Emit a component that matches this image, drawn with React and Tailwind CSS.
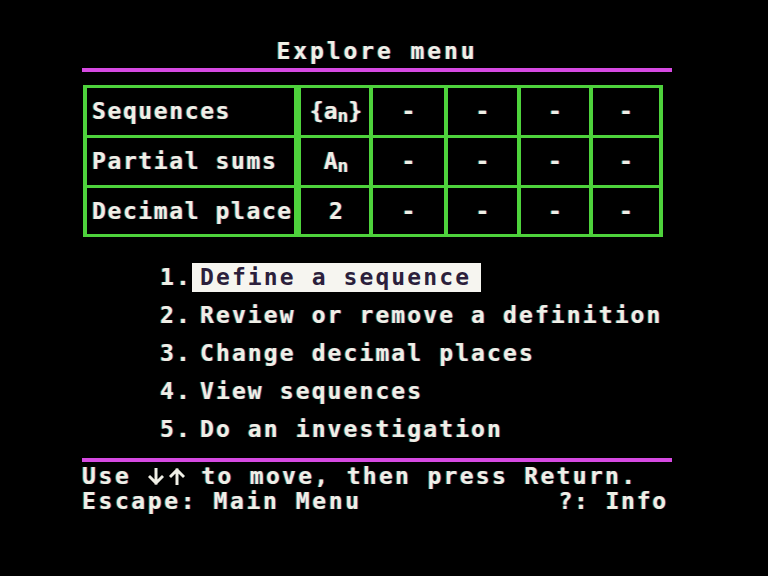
import React from 'react';

// Apple II style "Explore menu" screen
const rows = [
  { label: 'Sequences', sym: <>{'{'}a<Sub>n</Sub>{'}'}</> },
  { label: 'Partial sums', sym: <>A<Sub>n</Sub></> },
  { label: 'Decimal place', sym: '2' },
];

const items = [
  'Define a sequence',
  'Review or remove a definition',
  'Change decimal places',
  'View sequences',
  'Do an investigation',
];

function Sub({ children }) {
  return <span className="relative top-[4px] text-[18px] tracking-normal">{children}</span>;
}

function Arrow({ up }) {
  return (
    <svg width="16" height="17" viewBox="0 0 16 17" className="inline-block">
      <path
        d={up ? 'M8 16V2M2 8l6-6 6 6' : 'M8 1v14M2 9l6 6 6-6'}
        fill="none"
        stroke="currentColor"
        strokeWidth="3"
        strokeLinecap="square"
      />
    </svg>
  );
}

export default function App() {
  return (
    <div className="w-[768px] h-[576px] bg-black overflow-hidden text-[#f0efe6] font-['DejaVu_Sans_Mono',monospace] font-bold text-[23px] tracking-[2.1px] [text-shadow:1px_0_#9a5cff70,-1px_0_#80ff6060]">
      <div className="ml-[82px] w-[590px] flex flex-col">
        <div className="mt-[39px] h-[24px] leading-[24px] text-center tracking-[2.9px]">Explore menu</div>
        <div className="mt-[5px] h-[4px] bg-[#d64ae2]" />

        <div className="mt-[13px] ml-[1px] w-[580px] bg-[#4ed23c] px-[4px] py-[3px] flex flex-col gap-[3px]">
          {rows.map((r, i) => (
            <div key={r.label} className={`flex gap-[4px] ${i === 2 ? 'h-[46px]' : 'h-[47px]'}`}>
              <div className="w-[207px] mr-[3px] bg-black flex items-center pl-[5px] whitespace-nowrap tracking-[1.6px]">{r.label}</div>
              <div className="w-[68px] bg-black flex items-center justify-center pl-[2px] whitespace-nowrap tracking-[0px]">{r.sym}</div>
              {[71, 69, 68, 66].map((w) => (
                <div key={w} className="bg-black flex items-center justify-center pl-[2px]" style={{ width: w }}>-</div>
              ))}
            </div>
          ))}
        </div>

        <div className="mt-[21px] ml-[78px] flex flex-col">
          {items.map((t, i) => (
            <div key={t} className="h-[38px] flex items-center whitespace-nowrap">
              <span className="w-[40px]">{i + 1}.</span>
              {i === 0 ? (
                <span className="-ml-[8px] pl-[8px] pr-[10px] h-[29px] leading-[29px] bg-[#f6f5f0] text-[#2c1f3c] [text-shadow:none]">{t}</span>
              ) : (
                <span>{t}</span>
              )}
            </div>
          ))}
        </div>

        <div className="mt-[10px] h-[4px] bg-[#d64ae2]" />
        <div className="mt-[1px] h-[26px] leading-[26px] whitespace-nowrap tracking-[2.6px] flex items-center">
          <span>Use</span>
          <span className="inline-flex gap-[5px] w-[37px] ml-[17px]"><Arrow /><Arrow up /></span>
          <span className="ml-[16px] tracking-[2.3px]">to move, then press Return.</span>
        </div>
        <div className="h-[25px] leading-[25px] flex justify-between pr-[4px] whitespace-nowrap tracking-[2.6px]">
          <span>Escape: Main Menu</span>
          <span className="tracking-[1.8px]">?: Info</span>
        </div>
      </div>
    </div>
  );
}
